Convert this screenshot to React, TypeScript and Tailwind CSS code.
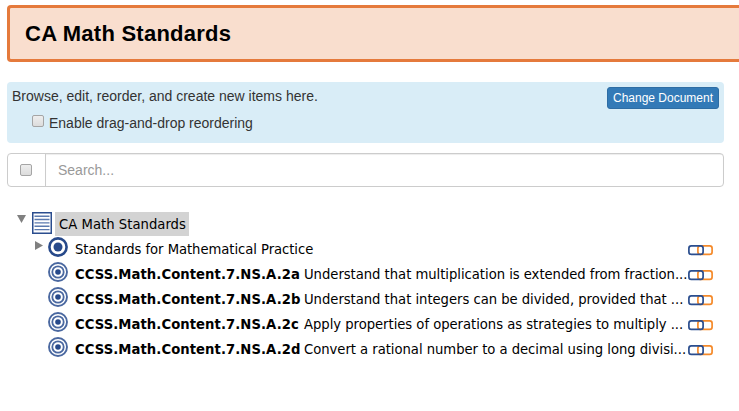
const rows = [
  { code: "CCSS.Math.Content.7.NS.A.2a", text: "Understand that multiplication is extended from fraction..." },
  { code: "CCSS.Math.Content.7.NS.A.2b", text: "Understand that integers can be divided, provided that ..." },
  { code: "CCSS.Math.Content.7.NS.A.2c", text: "Apply properties of operations as strategies to multiply ..." },
  { code: "CCSS.Math.Content.7.NS.A.2d", text: "Convert a rational number to a decimal using long divisi..." },
];

function Checkbox() {
  return <span className="block h-3 w-3 shrink-0 rounded-[2px] border border-[#a5a5a5] bg-linear-to-b from-[#eeeeee] to-[#dcdcdc]" />;
}

function DocumentIcon() {
  return (
    <svg className="block shrink-0" width="20" height="22" viewBox="0 0 20 22">
      <rect x="0.75" y="0.75" width="18.5" height="20.5" fill="#fff" stroke="#2a4d8e" strokeWidth="1.5" />
      <path d="M2.5 4.2h15M2.5 7.5h15M2.5 10.9h15M2.5 14.3h15M2.5 17.6h15" stroke="#5b79ae" strokeWidth="1.4" />
    </svg>
  );
}

function FolderTarget() {
  return (
    <svg className="block shrink-0" width="20" height="20" viewBox="0 0 20 20">
      <circle cx="10" cy="10" r="8.6" fill="#fff" stroke="#27498a" strokeWidth="2.6" />
      <circle cx="10" cy="10" r="4.5" fill="#27498a" />
    </svg>
  );
}

function LeafTarget() {
  return (
    <svg className="block shrink-0" width="20" height="20" viewBox="0 0 20 20">
      <circle cx="10" cy="10" r="9" fill="#fff" stroke="#4a68a0" strokeWidth="1.9" />
      <circle cx="10" cy="10" r="5.7" fill="none" stroke="#4a68a0" strokeWidth="1.8" />
      <circle cx="10" cy="10" r="2.8" fill="#27498a" />
    </svg>
  );
}

function LinkIcon() {
  return (
    <svg className="block shrink-0" width="25" height="11" viewBox="0 0 25 11">
      <rect x="9.9" y="0.9" width="14.2" height="8.4" rx="2.4" fill="none" stroke="#f58a2a" strokeWidth="1.7" />
      <rect x="0.9" y="0.9" width="14.2" height="8.4" rx="2.4" fill="none" stroke="#2a4d8e" strokeWidth="1.7" />
    </svg>
  );
}

export default function App() {
  return (
    <div className="h-[411px] w-[739px] overflow-hidden bg-white pt-[5px] pl-[7px] font-['Liberation_Sans',Arial,sans-serif] text-sm text-[#333]">
      <header className="h-[57px] rounded-l-[4px] border-3 border-r-0 border-[#e57a3c] bg-[#f9dece] pl-[15px]">
        <h1 className="pt-[10px] text-[22px] leading-[32px] font-bold tracking-[0.24px] text-black">CA Math Standards</h1>
      </header>
      <section className="mt-5 flex h-[61px] w-[717px] justify-between rounded-[4px] bg-[#d9edf7] pt-1 pr-[5px] pl-[5px]">
        <div>
          <p className="leading-[20px]">Browse, edit, reorder, and create new items here.</p>
          <label className="mt-[7px] ml-5 flex gap-[5px] leading-[20px]">
            <span className="pt-[2px]"><Checkbox /></span>
            <span>Enable drag-and-drop reordering</span>
          </label>
        </div>
        <button className="mt-px h-[22px] w-[112px] rounded-[3px] border border-[#2e6da4] bg-[#337ab7] text-xs leading-[18px] whitespace-nowrap text-white">Change Document</button>
      </section>
      <div className="mt-[10px] flex h-[34px] w-[717px] overflow-hidden rounded-[4px] border border-[#ccc]">
        <div className="flex w-[38px] items-center border-r border-[#ccc] pl-3"><Checkbox /></div>
        <div className="flex-1 pl-3 leading-[32px] text-[#999] shadow-[inset_0_1px_1px_rgba(0,0,0,0.075)]">Search...</div>
      </div>
      <div className="mt-[25px] font-['DejaVu_Sans_Condensed','DejaVu_Sans',sans-serif] text-[14.67px] whitespace-nowrap text-black">
        <div className="flex h-6 pl-[10px]">
          <svg className="mt-[3px] mr-[6px] shrink-0" width="9" height="8"><path d="M0 0h9L4.5 8z" fill="#808080" /></svg>
          <DocumentIcon />
          <span className="ml-[3px] w-[134px] bg-[#d3d3d3] pl-1 leading-[24px] tracking-[0.03px]">CA Math Standards</span>
        </div>
        <div className="flex h-[25px] pt-[1px] pl-[28px]">
          <svg className="mt-[4px] mr-[5px] shrink-0" width="8" height="9"><path d="M0 0v9L8 4.5z" fill="#808080" /></svg>
          <FolderTarget />
          <span className="ml-[7px] w-[613px] leading-[24px] tracking-[-0.05px]">Standards for Mathematical Practice</span>
          <span className="pt-[8px]"><LinkIcon /></span>
        </div>
        {rows.map((row) => (
          <div key={row.code} className="flex h-[25px] pt-[1px] pl-[41px]">
            <LeafTarget />
            <span className="ml-[7px] flex w-[613px] leading-[24px]">
              <b className="w-[229px] tracking-[0.07px]">{row.code}</b>
              <span className="tracking-[-0.03px]">{row.text}</span>
            </span>
            <span className="pt-[8px]"><LinkIcon /></span>
          </div>
        ))}
      </div>
    </div>
  );
}
